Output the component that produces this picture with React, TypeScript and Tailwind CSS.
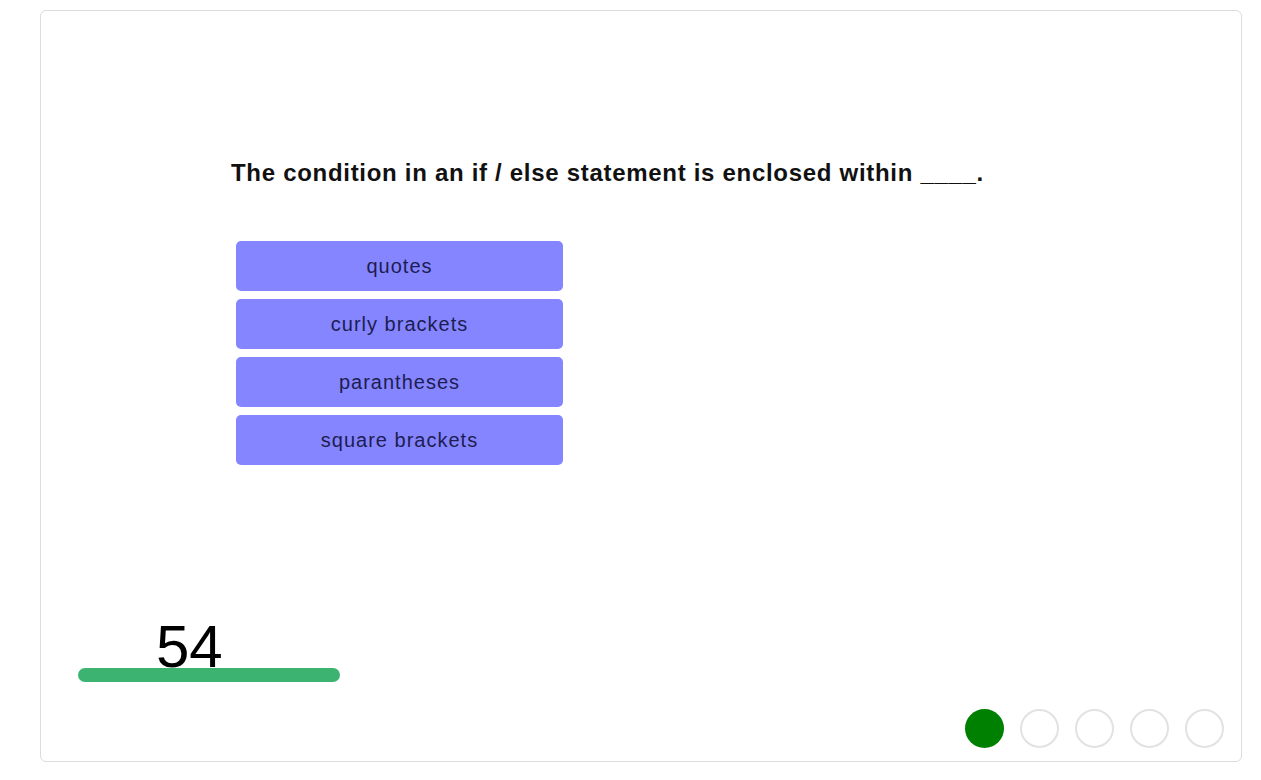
const answers = ['quotes', 'curly brackets', 'parantheses', 'square brackets'];

export default function App() {
  return (
    <div className="bg-white min-h-screen pl-[40px] pt-[10px] font-['Liberation_Sans',Arial,sans-serif]">
      <div className="w-[1202px] h-[752px] border border-[#dcdcdc] rounded-[6px] flex flex-col">
        {/* Question */}
        <h1 className="mt-[148px] ml-[190px] text-[24px] leading-[28px] font-bold text-[#111] tracking-[0.7px]">
          The condition in an if / else statement is enclosed within ____.
        </h1>

        {/* Answers */}
        <div className="mt-[54px] ml-[195px] w-[327px] flex flex-col gap-[8px]">
          {answers.map((a) => (
            <button
              key={a}
              className="h-[50px] rounded-[5px] bg-[#8585ff] text-[#1d1d52] text-[20px] tracking-[1px] flex items-center justify-center"
            >
              {a}
            </button>
          ))}
        </div>

        <div className="flex-1" />

        {/* Timer */}
        <div className="flex flex-col">
          <div className="ml-[115px] mb-[-9px] text-[60px] leading-none text-black">54</div>
          <div className="ml-[37px] w-[262px] h-[14px] rounded-full bg-[#3cb371]" />
        </div>

        {/* Progress dots */}
        <div className="mt-[27px] mb-[13px] mr-[17px] flex justify-end gap-[16px]">
          <div className="w-[39px] h-[39px] rounded-full bg-[#008000]" />
          <div className="w-[39px] h-[39px] rounded-full border-2 border-[#e2e2e2]" />
          <div className="w-[39px] h-[39px] rounded-full border-2 border-[#e2e2e2]" />
          <div className="w-[39px] h-[39px] rounded-full border-2 border-[#e2e2e2]" />
          <div className="w-[39px] h-[39px] rounded-full border-2 border-[#e2e2e2]" />
        </div>
      </div>
    </div>
  );
}
